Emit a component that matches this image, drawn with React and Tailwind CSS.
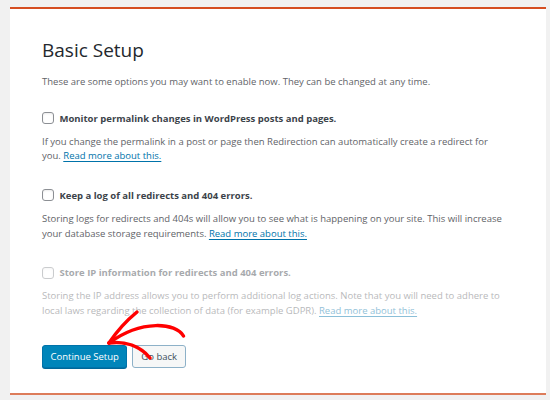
import React from 'react';

const Option = ({ label, children, disabled, className = '' }) => (
    <div className={`${disabled ? 'opacity-45' : ''} ${className}`}>
        <label className="flex items-center gap-[5.5px] h-[15px]">
            <span className="w-[12px] h-[12px] shrink-0 rounded-[3px] border border-[#8c8f94] bg-white shadow-[inset_0_1px_2px_rgba(0,0,0,0.08)]" />
            <span className="text-[9.5px] leading-[15px] font-bold text-[#3c434a]">{label}</span>
        </label>
        <p className="mt-[9.25px] text-[9.5px] leading-[14.5px] text-[#5f6368]">{children}</p>
    </div>
);

const ReadMore = () => (
    <a href="#" className="text-[#0073aa] underline underline-offset-[1.5px]">Read more about this.</a>
);

export default function App() {
    return (
        <div className="relative w-[550px] h-[400px] overflow-hidden bg-[#f1f1f1] pt-[7px] pl-[10px] pr-[4px] pb-[5px] font-['Open_Sans',sans-serif]">
            <div className="h-full bg-white border-t-2 border-b-2 border-t-[#d54e21] border-b-[#dd7c5a] pl-[32px] pt-[29px]">
                <h1 className="text-[19px] leading-[24px] font-normal text-[#23282d]">Basic Setup</h1>
                <p className="mt-[11.5px] text-[9.5px] leading-[15px] text-[#5f6368]">
                    These are some options you may want to enable now. They can be changed at any time.
                </p>

                <div className="w-[462px]">
                    <Option className="mt-[22px]" label="Monitor permalink changes in WordPress posts and pages.">
                        If you change the permalink in a post or page then Redirection can automatically create a redirect for you. <ReadMore />
                    </Option>

                    <Option className="mt-[24px]" label="Keep a log of all redirects and 404 errors.">
                        Storing logs for redirects and 404s will allow you to see what is happening on your site. This will increase your database storage requirements. <ReadMore />
                    </Option>

                    <Option className="mt-[24px]" disabled label="Store IP information for redirects and 404 errors.">
                        Storing the IP address allows you to perform additional log actions. Note that you will need to adhere to local laws regarding the collection of data (for example GDPR). <ReadMore />
                    </Option>
                </div>

                {/* Actions */}
                <div className="mt-[27px] flex gap-[5px]">
                    <button className="h-[23px] px-[7.5px] rounded-[3px] border border-[#0073aa] bg-[#0085ba] text-white text-[9.5px] shadow-[0_1px_0_#006799]">
                        Continue Setup
                    </button>
                    <button className="h-[23px] px-[8px] rounded-[3px] border border-[#8db1c8] bg-[#f6f7f7] text-[#3c4f5c] text-[9.5px]">
                        Go back
                    </button>
                </div>
            </div>

            {/* red hand-drawn arrow */}
            <svg className="absolute inset-0 pointer-events-none" width="550" height="400" viewBox="0 0 550 400" fill="none">
                <g stroke="#ff0000" strokeWidth="3.5" strokeLinecap="round" strokeLinejoin="round">
                    <path d="M183.5 336 C176 323, 142 319, 109 343" />
                    <path d="M137 312 Q121 325, 109 343" />
                    <path d="M109 343 C125 341, 140 346, 150 358" />
                </g>
            </svg>
        </div>
    );
}
